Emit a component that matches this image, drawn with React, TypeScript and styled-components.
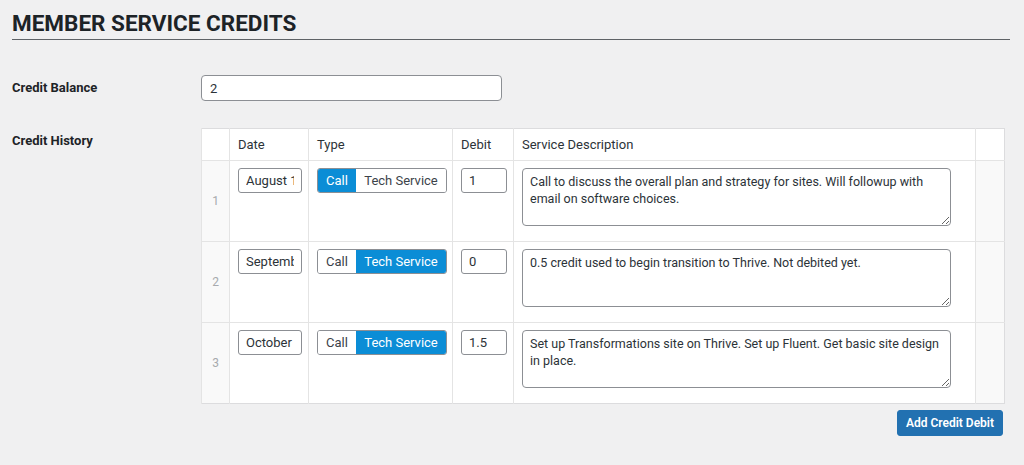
import React from 'react';
import styled, { createGlobalStyle } from 'styled-components';

const GlobalStyle = createGlobalStyle`
  body {
    margin: 0;
    background: #f0f0f1;
    font-family: Roboto, "Noto Sans", "Liberation Sans", sans-serif;
    color: #1d2327;
  }
`;

const Page = styled.div`
  padding: 0 14px 0 12px;
`;

const Title = styled.h1`
  margin: 0;
  padding: 13px 0 6px;
  font-size: 22.5px;
  font-weight: 700;
  line-height: 20px;
  border-bottom: 1px solid #5e6266;
  color: #1d2327;
`;

const FieldRow = styled.div<{ $top: number }>`
  display: flex;
  align-items: flex-start;
  margin-top: ${(p) => p.$top}px;
`;

const Label = styled.div<{ $offset: number }>`
  width: 189px;
  flex-shrink: 0;
  padding-top: ${(p) => p.$offset}px;
  font-size: 13px;
  font-weight: 700;
  color: #1d2327;
`;

const TextInput = styled.input<{ $w: number }>`
  box-sizing: border-box;
  width: ${(p) => p.$w}px;
  height: 26px;
  padding: 0 8px;
  border: 1px solid #8c8f94;
  border-radius: 4px;
  background: #fff;
  font: inherit;
  font-size: 13px;
  color: #2c3338;
  outline: none;
`;

const Grid = styled.table`
  border-collapse: collapse;
  background: #fff;
  border: 1px solid #dcdcde;
  table-layout: fixed;
  width: 803px;
`;

const HeadCell = styled.th<{ $w: number }>`
  box-sizing: border-box;
  width: ${(p) => p.$w}px;
  height: 32px;
  padding: 0 8px;
  text-align: left;
  font-size: 13px;
  font-weight: 400;
  color: #2c3338;
  border-left: 1px solid #e4e4e4;
  border-bottom: 1px solid #e4e4e4;
`;

const Cell = styled.td<{ $shade?: boolean }>`
  box-sizing: border-box;
  padding: 7px 8px;
  vertical-align: top;
  height: 81px;
  background: ${(p) => (p.$shade ? '#f9f9f9' : '#fff')};
  border-left: 1px solid #e4e4e4;
  border-top: 1px solid #e4e4e4;
`;

const IndexCell = styled(Cell)`
  vertical-align: middle;
  text-align: center;
  font-size: 12px;
  color: #a7aaad;
  padding: 0;
`;

const SmallInput = styled(TextInput)`
  height: 25px;
  border-radius: 3px;
  padding: 0 7px;
`;

const Toggle = styled.div`
  display: inline-flex;
  height: 25px;
  box-sizing: border-box;
  border: 1px solid #8c8f94;
  border-radius: 3px;
  overflow: hidden;
`;

const ToggleOption = styled.button<{ $active: boolean; $w: number }>`
  width: ${(p) => p.$w}px;
  border: none;
  padding: 0;
  font: inherit;
  font-size: 13px;
  background: ${(p) => (p.$active ? '#0b8dd6' : '#fff')};
  color: ${(p) => (p.$active ? '#fff' : '#3c434a')};
  cursor: pointer;
`;

const Description = styled.textarea`
  display: block;
  box-sizing: border-box;
  width: 429px;
  height: 58px;
  padding: 4px 7px;
  border: 1px solid #8c8f94;
  border-radius: 4px;
  font: inherit;
  font-size: 12.5px;
  line-height: 17px;
  color: #2c3338;
  resize: vertical;
  outline: none;
`;

const TableWrap = styled.div`
  display: flex;
  flex-direction: column;
  align-items: flex-end;
  gap: 6px;
`;

const PrimaryButton = styled.button`
  height: 26px;
  padding: 0 8px;
  margin-right: 2px;
  border: 1px solid #2271b1;
  border-radius: 3px;
  background: #2271b1;
  color: #fff;
  font: inherit;
  font-size: 12px;
  font-weight: 600;
  cursor: pointer;
`;

type Entry = { date: string; type: 'call' | 'tech'; debit: string; description: string };

const entries: Entry[] = [
  {
    date: 'August 18',
    type: 'call',
    debit: '1',
    description: 'Call to discuss the overall plan and strategy for sites. Will followup with email on software choices.',
  },
  {
    date: 'September 2',
    type: 'tech',
    debit: '0',
    description: '0.5 credit used to begin transition to Thrive. Not debited yet.',
  },
  {
    date: 'October',
    type: 'tech',
    debit: '1.5',
    description: 'Set up Transformations site on Thrive. Set up Fluent. Get basic site design in place.',
  },
];

const App: React.FC = () => (
  <Page>
    <GlobalStyle />
    <Title>MEMBER SERVICE CREDITS</Title>

    <FieldRow $top={35}>
      <Label $offset={5}>Credit Balance</Label>
      <TextInput $w={301} defaultValue="2" />
    </FieldRow>

    <FieldRow $top={27}>
      <Label $offset={5}>Credit History</Label>
      <TableWrap>
        <Grid>
          <thead>
            <tr>
              <HeadCell $w={28} />
              <HeadCell $w={79}>Date</HeadCell>
              <HeadCell $w={144}>Type</HeadCell>
              <HeadCell $w={61}>Debit</HeadCell>
              <HeadCell $w={462}>Service Description</HeadCell>
              <HeadCell $w={29} />
            </tr>
          </thead>
          <tbody>
            {entries.map((e, i) => (
              <tr key={i}>
                <IndexCell $shade>{i + 1}</IndexCell>
                <Cell>
                  <SmallInput $w={64} defaultValue={e.date} />
                </Cell>
                <Cell>
                  <Toggle>
                    <ToggleOption $w={38} $active={e.type === 'call'}>Call</ToggleOption>
                    <ToggleOption $w={90} $active={e.type === 'tech'}>Tech Service</ToggleOption>
                  </Toggle>
                </Cell>
                <Cell>
                  <SmallInput $w={46} defaultValue={e.debit} />
                </Cell>
                <Cell>
                  <Description defaultValue={e.description} />
                </Cell>
                <Cell $shade />
              </tr>
            ))}
          </tbody>
        </Grid>
        <PrimaryButton>Add Credit Debit</PrimaryButton>
      </TableWrap>
    </FieldRow>
  </Page>
);

export default App;
